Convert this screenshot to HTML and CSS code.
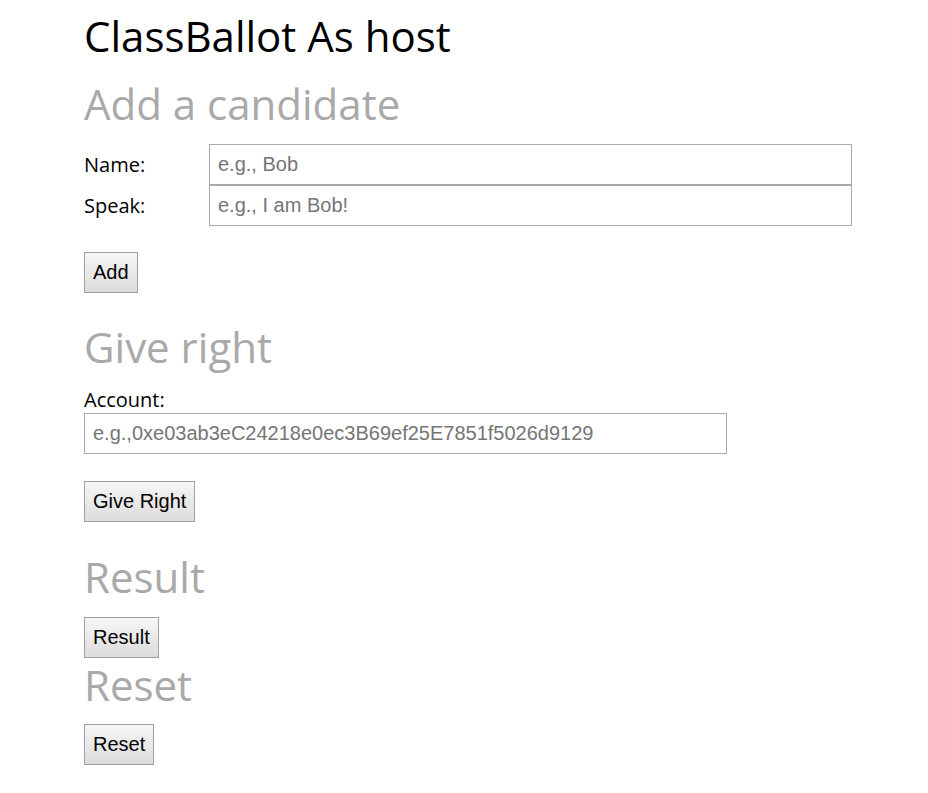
FILE: index.html
```html
<!DOCTYPE html>
<html>
<head>
<meta charset="utf-8">
<link rel="stylesheet" href="styles.css">
</head>
<body>
<div class="page">
  <h1 class="title">ClassBallot As host</h1>

  <h2 class="section section-add">Add a candidate</h2>
  <div class="form-grid">
    <label class="label">Name:</label>
    <input class="field" type="text" placeholder="e.g., Bob">
    <label class="label">Speak:</label>
    <input class="field" type="text" placeholder="e.g., I am Bob!">
  </div>
  <button class="btn btn-add">Add</button>

  <h2 class="section section-give">Give right</h2>
  <label class="label label-block">Account:</label>
  <input class="field field-account" type="text" placeholder="e.g.,0xe03ab3eC24218e0ec3B69ef25E7851f5026d9129">
  <button class="btn btn-give">Give Right</button>

  <h2 class="section section-result">Result</h2>
  <button class="btn btn-result">Result</button>

  <h2 class="section section-reset">Reset</h2>
  <button class="btn btn-reset">Reset</button>
</div>
</body>
</html>
```

FILE: styles.css
```css
html, body {
  margin: 0;
  padding: 0;
  background: #fff;
}
.page {
  padding-left: 84px;
  font-family: "Open Sans", "Liberation Sans", sans-serif;
  display: flex;
  flex-direction: column;
  align-items: flex-start;
}
.title {
  margin: 7px 0 0 0;
  font-size: 42px;
  font-weight: 400;
  line-height: 57px;
  color: #000;
}
.section {
  margin: 0;
  font-size: 42px;
  font-weight: 400;
  line-height: 57px;
  color: #a9a9a9;
}
.section-add {
  margin-top: 11px;
}
.form-grid {
  margin-top: 12px;
  display: grid;
  grid-template-columns: 125px 643px;
  grid-auto-rows: 41px;
}
.label {
  font-size: 20px;
  color: #000;
  display: flex;
  align-items: center;
}
.label-block {
  display: block;
  line-height: 27px;
  margin-top: 11px;
}
.field {
  box-sizing: border-box;
  height: 41px;
  width: 643px;
  margin: 0;
  padding: 0 8px;
  border: 1px solid #a9a9a9;
  border-radius: 0;
  font-family: "Liberation Sans", Arial, sans-serif;
  font-size: 20px;
  color: #000;
  outline: none;
}
.field::placeholder {
  color: #757575;
}
.btn {
  box-sizing: border-box;
  height: 41px;
  margin: 26px 0 0 0;
  padding: 0 8px;
  border: 1px solid #a0a0a0;
  border-radius: 0;
  background: linear-gradient(#f6f6f6, #dcdcdc);
  font-family: "Liberation Sans", Arial, sans-serif;
  font-size: 20px;
  color: #000;
}
.btn-give {
  margin-top: 27px;
}
.section-give {
  margin-top: 25px;
}
.section-result {
  margin-top: 26px;
}
.btn-result {
  margin-top: 12px;
}
.section-reset {
  margin-top: -2px;
}
.btn-reset {
  margin-top: 11px;
}
```
